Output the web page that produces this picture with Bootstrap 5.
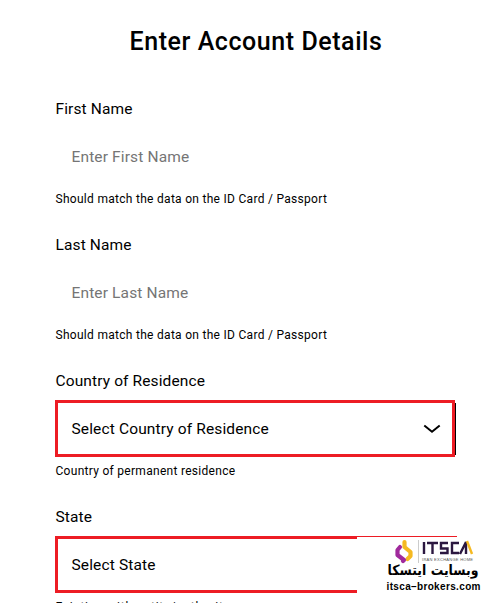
<!DOCTYPE html>
<html lang="en">
<head>
<meta charset="utf-8">
<meta name="viewport" content="width=device-width, initial-scale=1">
<title>Enter Account Details</title>
<link href="https://cdn.jsdelivr.net/npm/bootstrap@5.3.0/dist/css/bootstrap.min.css" rel="stylesheet">
<style>
body{font-family:Roboto,"Liberation Sans",sans-serif;color:#000;background:#fff;height:603px}
.page{height:603px}
.account-form{width:401px;margin-left:55px;padding-top:25px}
.title{font-size:25px;line-height:34px;font-weight:500;letter-spacing:.56px;margin:0 0 38px;padding-left:1px}
.field{height:136px}
.field .form-label{display:block;font-size:15.5px;line-height:24px;margin:0 0 7px .5px;letter-spacing:.12px}
.field .form-control,.picker{height:57px;width:400px;font-size:15.5px;letter-spacing:.14px;padding:1px 13.5px 0;border:3px solid #ed1c24;border-radius:0;color:#000;background:#fff}
.picker{padding-top:2px}
.field .form-control{border-color:transparent}
.field .form-control::placeholder{color:#757575;opacity:1}
.country{box-shadow:1px 0 0 #000;clip-path:polygon(0 0,400px 0,400px 3px,401px 3px,401px 55px,400px 55px,400px 57px,0 57px)}
.country svg{margin-right:-2px;margin-top:-1px}
.field .form-text{font-size:12px;line-height:18px;margin:5px 0 0 .5px;color:#000;letter-spacing:.29px}
.field .state-hint{letter-spacing:.75px}
.watermark{left:357px;top:537px;width:144px;height:66px;background:#fff}
.rule{left:357px;top:536px;width:100px;height:1px;background:#ed1c24}
.watermark svg{display:block}
</style>
</head>
<body>
<main class="page position-relative overflow-hidden">
<form class="account-form">
<h1 class="title text-center">Enter Account Details</h1>
<div class="field"><label class="form-label" for="first">First Name</label><input id="first" class="form-control" placeholder="Enter First Name"><p class="form-text">Should match the data on the ID Card / Passport</p></div>
<div class="field"><label class="form-label" for="last">Last Name</label><input id="last" class="form-control" placeholder="Enter Last Name"><p class="form-text">Should match the data on the ID Card / Passport</p></div>
<div class="field"><label class="form-label">Country of Residence</label>
<button type="button" class="picker country d-flex align-items-center justify-content-between"><span>Select Country of Residence</span><svg width="18" height="10" viewBox="0 0 18 10" fill="none" stroke="#000" stroke-width="2"><path d="M1.300 1.500 9 7.700l7.700-6.200"/></svg></button>
<p class="form-text">Country of permanent residence</p></div>
<div class="field"><label class="form-label">State</label>
<button type="button" class="picker d-flex align-items-center"><span>Select State</span></button>
<p class="form-text state-hint">Existing with entity/authority</p></div>
</form>
<div class="rule position-absolute"></div>
<div class="watermark position-absolute">
<svg width="144" height="66" viewBox="0 0 144 66">
<g fill="none" stroke-width="4.200" stroke-linejoin="round" stroke-linecap="round">
<path d="M47.500 5v5l6 5v4l-3 3" stroke="#f5b921"/>
<path d="M43 10 40.500 13v5l6.500 5-1 1" stroke="#a02a9c"/></g>
<path d="M61.500 3v23" stroke="#ccc" stroke-width="1"/>
<g fill="none" stroke="#2b1740" stroke-width="2.400"><path d="M67 5v12M70 6h11M75.500 6v11M91 6h-7v5.500h6.500V16H83M102 6h-7v10h7M103 17l6-12v12"/></g>
<path d="M110 4l5 13" stroke="#f5b921" stroke-width="2.400"/>
<text x="65" y="24" font-size="4" textLength="51" font-family="Liberation Sans,sans-serif" fill="#555">IRAN EXCHANGE HOME</text>
<text x="76" y="38" text-anchor="middle" direction="rtl" font-size="14" font-weight="700" textLength="91" lengthAdjust="spacingAndGlyphs" font-family="DejaVu Sans,sans-serif">وبسایت ایتسکا</text>
<text x="29.500" y="53" font-size="10" font-weight="700" textLength="94" lengthAdjust="spacing" font-family="Liberation Sans,sans-serif">itsca–brokers.com</text>
</svg>
</div>
</main>
<script src="https://cdn.jsdelivr.net/npm/bootstrap@5.3.0/dist/js/bootstrap.bundle.min.js"></script>
</body>
</html>
